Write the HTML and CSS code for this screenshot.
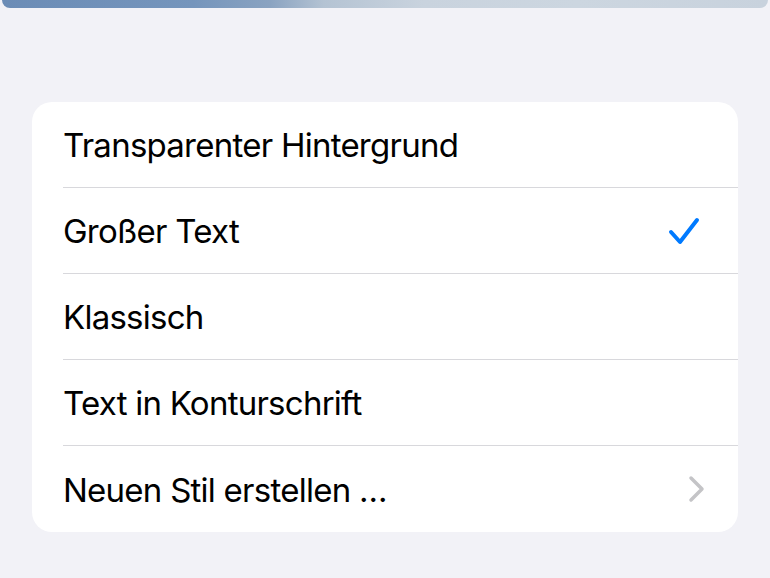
FILE: index.html
```html
<!DOCTYPE html>
<html lang="de">
<head>
<meta charset="utf-8">
<link rel="stylesheet" href="styles.css">
</head>
<body>
<div class="topbar"></div>
<div class="card">
  <div class="row"><span class="label">Transparenter Hintergrund</span></div>
  <div class="row"><span class="label">Großer Text</span>
    <svg class="check" width="32" height="30" viewBox="0 0 32 30"><path d="M3 16 L12 26 L29 4" fill="none" stroke="#007aff" stroke-width="4" stroke-linecap="round" stroke-linejoin="round"/></svg>
  </div>
  <div class="row"><span class="label">Klassisch</span></div>
  <div class="row"><span class="label">Text in Konturschrift</span></div>
  <div class="row"><span class="label">Neuen Stil erstellen …</span>
    <svg class="chev" width="18" height="28" viewBox="0 0 18 28"><path d="M3 3 L14 14 L3 25" fill="none" stroke="#c4c4c7" stroke-width="3.5" stroke-linecap="round" stroke-linejoin="round"/></svg>
  </div>
</div>
</body>
</html>
```
FILE: styles.css
```css
html, body { margin: 0; padding: 0; }
body {
  background: #f2f2f7;
  font-family: Inter, "Noto Sans", sans-serif;
  width: 770px;
  height: 578px;
  overflow: hidden;
}
.topbar {
  margin: 0 2px;
  height: 8px;
  border-radius: 0 0 9px 9px;
  background: linear-gradient(90deg, #6b8cb6 0%, #7595bc 25%, #8aa3c1 35%, #b4c3d3 42%, #c9d3de 55%, #ccd6e0 75%, #c8d2dd 100%);
}
.card {
  margin: 94px 32px 0 32px;
  background: #ffffff;
  border-radius: 20px;
  overflow: hidden;
}
.row {
  height: 86px;
  margin-left: 31px;
  padding-right: 32px;
  display: flex;
  align-items: center;
  justify-content: space-between;
  border-bottom: 1px solid #d8d8dc;
  box-sizing: border-box;
}
.row:last-child { border-bottom: none; }
.label {
  font-size: 33px;
  color: #000;
  letter-spacing: -0.75px;
  padding-top: 1px;
}
.check { margin-right: 6px; }
.chev { margin-right: 0; }
```
